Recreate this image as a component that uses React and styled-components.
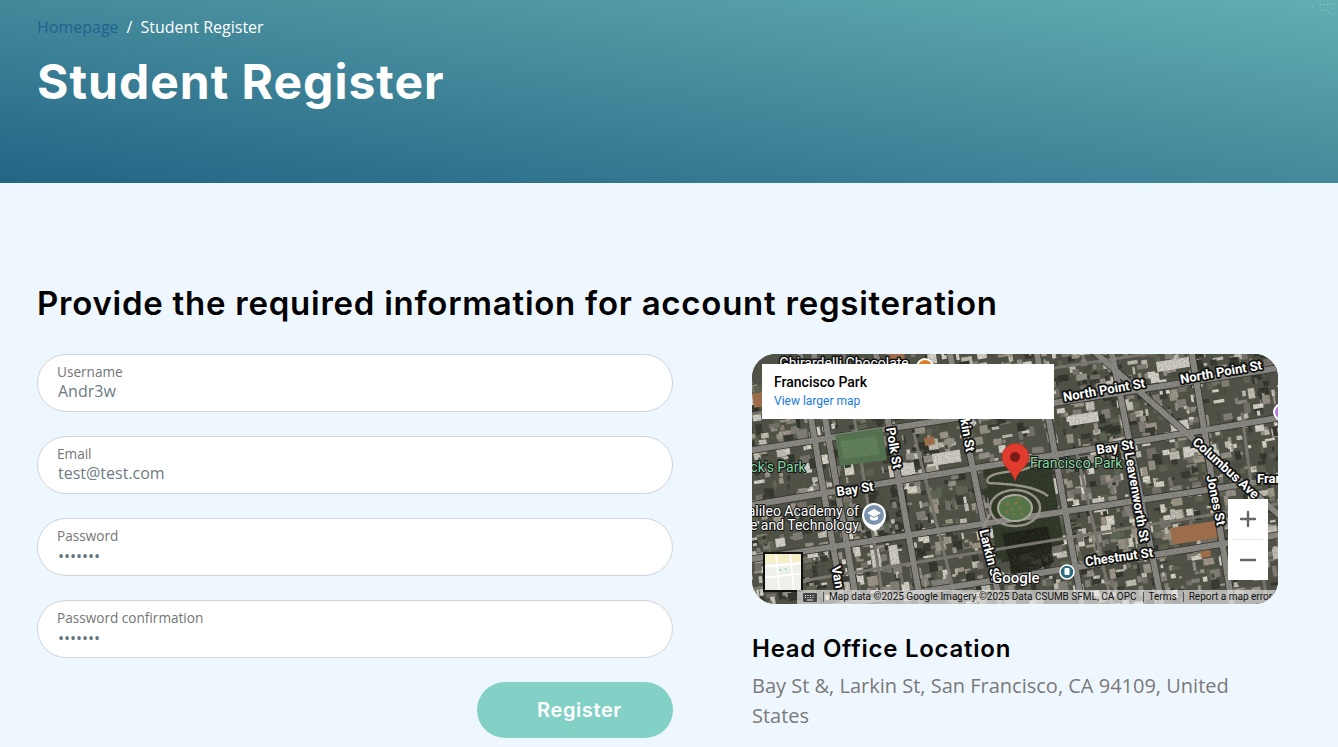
import React from "react";
import styled, { createGlobalStyle } from "styled-components";
import { Plus, Minus } from "lucide-react";

const Global = createGlobalStyle`
  html, body {
    margin: 0;
    padding: 0;
    background: #eff7fe;
    font-family: "Open Sans", "Liberation Sans", sans-serif;
  }
  * { box-sizing: border-box; }
`;

// seeded so the map looks the same on every load
let seed = 7;
const rnd = () => {
  seed = (seed * 16807) % 2147483647;
  return seed / 2147483647;
};
const roofColors = ["#9a958b", "#c9c5bb", "#33352c", "#77736a", "#a39b8c", "#2b2f25", "#e0dcd2", "#5d6450", "#474b3c", "#85827a"];
const roofs = Array.from({ length: 2600 }, () => ({
  x: rnd() * 560 - 20,
  y: rnd() * 290 - 20,
  w: 2 + rnd() * 9,
  h: 2 + rnd() * 9,
  fill: roofColors[Math.floor(rnd() * roofColors.length)],
}));
const orangeRoofs = [[418, 174, 46, 17], [448, 196, 10, 8], [172, 84, 10, 8], [136, 0, 16, 8], [0, 40, 12, 14]];
const whiteRoofs = [[118, 196, 9, 22], [136, 192, 9, 22], [316, 62, 30, 10], [404, 8, 34, 10], [136, 112, 26, 12], [180, 100, 28, 12], [290, 128, 18, 14], [418, 68, 18, 16], [340, 145, 12, 14]];
const roads = [
  [0, 96, 526, 14], [0, 151, 526, 64], [0, 205, 526, 125], [0, 265, 526, 181],
  [48, 0, 91, 250], [62, 0, 105, 250], [124, 0, 169, 250], [198, 0, 248, 250],
  [285, 0, 330, 250], [360, 0, 410, 250], [440, 0, 480, 250], [345, 0, 526, 160],
];
const thinRoads = [[0, 60, 526, -20], [0, 235, 526, 150], [92, 0, 132, 250], [162, 80, 205, 250], [325, 100, 360, 250], [490, 60, 515, 250]];
const flowerbeds = [[256, 150], [260, 155], [264, 149], [268, 154], [262, 160], [270, 160], [255, 158], [266, 145]];

const Page = styled.div`
  min-height: 747px;
  color: #000;
`;

const Banner = styled.header`
  position: relative;
  height: 183px;
  padding: 16px 37px 0;
  overflow: hidden;
  background: linear-gradient(to top right, #246485, #62aeb1);
`;

const Crumbs = styled.nav`
  display: flex;
  gap: 8px;
  font-size: 16px;
  line-height: 22px;
  color: #fff;
`;

const CrumbLink = styled.a`
  color: #1f6390;
`;

const BannerTitle = styled.h1`
  margin: 14px 0 0;
  font-family: Inter, "Liberation Sans", sans-serif;
  font-size: 48px;
  line-height: 60px;
  font-weight: 700;
  letter-spacing: 1px;
  color: #fff;
`;

const Specks = styled.svg`
  position: absolute;
  top: 0;
  right: 0;
`;

const Main = styled.main`
  padding: 100px 60px 9px 37px;
`;

const Lead = styled.h2`
  margin: 0 0 31px;
  font-family: Inter, "Liberation Sans", sans-serif;
  font-size: 33px;
  line-height: 40px;
  font-weight: 600;
  letter-spacing: 0.75px;
`;

const Columns = styled.div`
  display: grid;
  grid-template-columns: 636px 526px;
  column-gap: 79px;
`;

const Form = styled.form`
  display: flex;
  flex-direction: column;
  gap: 24px;
`;

const Field = styled.label`
  display: flex;
  flex-direction: column;
  height: 58px;
  padding: 8px 19px 0;
  background: #fff;
  border: 1px solid #ced4da;
  border-radius: 29px;
`;

const FieldName = styled.span`
  font-size: 13.6px;
  line-height: 17px;
  color: #757575;
`;

const FieldInput = styled.input`
  width: 100%;
  margin: 0;
  padding: 0 0 0 1px;
  border: 0;
  outline: 0;
  background: transparent;
  font-family: "Open Sans", sans-serif;
  font-size: 16px;
  line-height: 24px;
  height: 22px;
  color: #6c7b85;

  &[type="password"] {
    margin-top: 1px;
    color: #5f7380;
  }
`;

const Actions = styled.div`
  display: flex;
  justify-content: flex-end;
`;

const RegisterButton = styled.button`
  width: 196px;
  height: 56px;
  padding: 0 0 0 9px;
  border: 0;
  border-radius: 28px;
  background: #82d0c6;
  color: #fff;
  font-family: Inter, "Liberation Sans", sans-serif;
  font-size: 20px;
  font-weight: 600;
  letter-spacing: 0.6px;
`;

const MapFrame = styled.div`
  position: relative;
  height: 250px;
  border-radius: 24px;
  overflow: hidden;
  background: #4a4a40;
`;

const MapArt = styled.svg`
  display: block;
`;

const Street = styled.text`
  font-family: Roboto, "Liberation Sans", sans-serif;
  font-size: ${p => p.$size || 13}px;
  font-weight: ${p => p.$weight || 700};
  fill: ${p => p.$fill || "#fff"};
  stroke: #111;
  stroke-width: ${p => p.$halo || 3.5}px;
  stroke-linejoin: round;
  paint-order: stroke;
  dominant-baseline: central;
  text-anchor: ${p => p.$anchor || "middle"};
`;

const PlaceCard = styled.div`
  position: absolute;
  top: 10px;
  left: 10px;
  width: 292px;
  height: 55px;
  padding: 9px 12px;
  background: #fff;
  font-family: Roboto, sans-serif;
`;

const PlaceName = styled.div`
  font-size: 14px;
  line-height: 18px;
  font-weight: 500;
  color: #000;
`;

const PlaceLink = styled.a`
  display: block;
  margin-top: 2px;
  font-size: 12px;
  line-height: 16px;
  color: #1a79dc;
`;

const ZoomBox = styled.div`
  position: absolute;
  top: 145px;
  right: 10px;
  width: 40px;
  height: 81px;
  display: flex;
  flex-direction: column;
  align-items: center;
  background: #fff;
  color: #666;
`;

const ZoomBtn = styled.div`
  height: 40px;
  display: flex;
  align-items: center;
  justify-content: center;
`;

const ZoomRule = styled.div`
  width: 30px;
  height: 1px;
  background: #e6e6e6;
`;

const Thumb = styled.svg`
  position: absolute;
  left: 11px;
  top: 198px;
  border: 2px solid #111;
  background: #eef1ea;
`;

const Credits = styled.div`
  position: absolute;
  left: 45px;
  right: 0;
  bottom: 0;
  height: 14px;
  display: flex;
  align-items: center;
  background: rgba(245, 245, 245, 0.62);
  font-family: Roboto, sans-serif;
  font-size: 10px;
  color: #111;
  white-space: nowrap;
`;

const Keys = styled.svg`
  flex-shrink: 0;
  margin: 0 6px;
`;

const Credit = styled.span`
  padding: 0 6px 0 5px;
  border-left: 1px solid #555;
  line-height: 10px;
`;

const OfficeTitle = styled.h3`
  margin: 28px 0 0;
  font-family: Inter, "Liberation Sans", sans-serif;
  font-size: 24px;
  line-height: 34px;
  font-weight: 600;
  letter-spacing: 0.75px;
`;

const OfficeAddress = styled.p`
  margin: 5px 0 0;
  font-size: 20px;
  line-height: 30px;
  color: #7a7a7a;
`;

const fields = [
  { name: "Username", value: "Andr3w", type: "text" },
  { name: "Email", value: "test@test.com", type: "text" },
  { name: "Password", value: "1234567", type: "password" },
  { name: "Password confirmation", value: "1234567", type: "password" },
];

const specks = [[62, 6], [67, 6], [76, 4], [80, 4], [84, 4], [88, 4], [92, 3], [90, 8], [78, 11], [83, 10], [86, 13]];

function SatelliteMap() {
  return (
    <MapArt width="526" height="250" viewBox="0 0 526 250">
      <defs>
        <filter id="grain" x="0" y="0" width="100%" height="100%">
          <feTurbulence type="fractalNoise" baseFrequency="0.6" numOctaves="2" seed="4" />
          <feColorMatrix values="0 0 0 0 0.1  0 0 0 0 0.1  0 0 0 0 0.08  0.7 0 0 0 -0.2" />
        </filter>
      </defs>
      <rect width="526" height="250" fill="#4e5044" />
      <g transform="rotate(-9 263 125)">
        {roofs.map((r, i) => (
          <rect key={i} x={r.x} y={r.y} width={r.w} height={r.h} fill={r.fill} />
        ))}
      </g>
      {orangeRoofs.map(([x, y, w, h], i) => (
        <rect key={i} x={x} y={y} width={w} height={h} fill="#a8704a" transform={`rotate(-9 ${x} ${y})`} />
      ))}
      {whiteRoofs.map(([x, y, w, h], i) => (
        <rect key={i} x={x} y={y} width={w} height={h} fill="#d9d5cc" transform={`rotate(-9 ${x} ${y})`} />
      ))}
      <path d="M232 115 L298 106 L312 190 L245 206 Z" fill="#2a3322" />
      <path d="M250 180 L296 172 L302 208 L262 226 Z" fill="#14180f" opacity="0.85" />
      <g stroke="#2b2b25" strokeLinecap="square">
        {roads.map(([a, b, c, d], i) => (
          <line key={i} x1={a} y1={b} x2={c} y2={d} strokeWidth="7.5" />
        ))}
      </g>
      <g stroke="#8d8b86" strokeLinecap="square">
        {thinRoads.map(([a, b, c, d], i) => (
          <line key={i} x1={a} y1={b} x2={c} y2={d} strokeWidth="3" stroke="#7d7a72" />
        ))}
        {roads.map(([a, b, c, d], i) => (
          <line key={i} x1={a} y1={b} x2={c} y2={d} strokeWidth="6" />
        ))}
      </g>
      <path d="M83 81 L130 74 L135 106 L88 112 Z" fill="#52754f" />
      <path d="M88 87 L124 82 L128 100 L92 105 Z" fill="#5f8458" />
      <g fill="none" stroke="#a09c90" strokeWidth="2.5">
        <ellipse cx="263" cy="154" rx="25" ry="18" />
        <path d="M236 129 C232 120 250 118 270 116 L288 110 M236 129 C250 130 280 130 296 142 M238 160 L232 172" />
      </g>
      <ellipse cx="263" cy="154" rx="17" ry="13" fill="#557a48" stroke="#b9b5a8" strokeWidth="2" />
      {flowerbeds.map(([x, y], i) => (
        <circle key={i} cx={x} cy={y} r="1" fill="#c9702f" />
      ))}
      <rect width="526" height="250" filter="url(#grain)" />

      <Street $size={14} $weight={400} $halo={3} x="92" y="9">Ghirardelli Chocolate</Street>
      <circle cx="173" cy="13" r="9" fill="#fff" />
      <circle cx="173" cy="13" r="7" fill="#d9822b" />
      <circle cx="530" cy="58" r="8" fill="#b57be8" stroke="#fff" strokeWidth="2" />

      <Street transform="translate(352 36) rotate(-10)">North Point St</Street>
      <Street transform="translate(469 18) rotate(-10)">North Point St</Street>
      <Street transform="translate(363 93) rotate(-9)">Bay St</Street>
      <Street transform="translate(103 135) rotate(-9)">Bay St</Street>
      <Street transform="translate(142 94) rotate(80)">Polk St</Street>
      <Street transform="translate(214 72) rotate(80)">Larkin St</Street>
      <Street transform="translate(238 201) rotate(76)">Larkin St</Street>
      <Street transform="translate(385 143) rotate(80)">Leavenworth St</Street>
      <Street transform="translate(464 146) rotate(78)">Jones St</Street>
      <Street transform="translate(474 114) rotate(42)">Columbus Ave</Street>
      <Street transform="translate(367 203) rotate(-8)">Chestnut St</Street>
      <Street transform="translate(86 223) rotate(80)">Van</Street>
      <Street $anchor="start" x="505" y="124">Francisco</Street>

      <Street $anchor="start" $size={14} $weight={400} $fill="#8ad9a4" $halo={2} x="-17" y="113">Jack's Park</Street>
      <Street $anchor="start" $size={14} $weight={400} $fill="#8ad9a4" $halo={2} x="278" y="109">Francisco Park</Street>
      <Street $anchor="end" $size={14} $weight={400} $halo={2} x="107" y="157">Galileo Academy of</Street>
      <Street $anchor="end" $size={14} $weight={400} $halo={2} x="107" y="171">Science and Technology</Street>

      <path d="M122 177 C113 173 110 167 110 161 A12 12 0 0 1 134 161 C134 167 131 173 122 177Z" fill="#fff" />
      <circle cx="122" cy="161" r="10" fill="#7b93ae" />
      <path d="M115 159 L122 155 L129 159 L122 163Z M118 162 V165 C120 167 124 167 126 165 V162 L122 164Z" fill="#fff" />

      <circle cx="315" cy="218" r="7" fill="#2f6b7e" stroke="#fff" strokeWidth="1.5" />
      <rect x="312.500" y="214" width="5" height="7" rx="1" fill="#fff" />

      <path d="M263 127 C260 116 250 112 250 103 A13.500 13.500 0 0 1 277 103 C277 112 266 116 263 127Z" fill="#e03c2e" stroke="#b52a20" strokeWidth="0.5" />
      <circle cx="263" cy="103" r="5" fill="#7a1c15" />

      <Street $anchor="start" $size={15} $weight={500} $halo={2} x="240" y="224">Google</Street>
    </MapArt>
  );
}

export default function App() {
  return (
    <Page>
      <Global />
      <Banner>
        <Crumbs>
          <CrumbLink>Homepage</CrumbLink>
          <span>/</span>
          <span>Student Register</span>
        </Crumbs>
        <BannerTitle>Student Register</BannerTitle>
        <Specks width="30" height="16" viewBox="62 0 34 16">
          {specks.map(([x, y], i) => (
            <circle key={i} cx={x} cy={y} r="0.6" fill="#a8d5d6" />
          ))}
        </Specks>
      </Banner>
      <Main>
        <Lead>Provide the required information for account regsiteration</Lead>
        <Columns>
          <Form>
            {fields.map(f => (
              <Field key={f.name}>
                <FieldName>{f.name}</FieldName>
                <FieldInput type={f.type} defaultValue={f.value} readOnly />
              </Field>
            ))}
            <Actions>
              <RegisterButton type="button">Register</RegisterButton>
            </Actions>
          </Form>
          <div>
            <MapFrame>
              <SatelliteMap />
              <PlaceCard>
                <PlaceName>Francisco Park</PlaceName>
                <PlaceLink>View larger map</PlaceLink>
              </PlaceCard>
              <Thumb width="40" height="40" viewBox="0 0 40 40">
                <path d="M0 0H40V10H0Z" fill="#f5efc8" />
                <path d="M0 14L40 10M0 26L40 22M12 0L16 40M28 0L32 40" stroke="#fff" strokeWidth="2" />
                <path d="M16 17h2v1.500h-2zM22 16h2v1.500h-2z" fill="#5fd4a4" />
              </Thumb>
              <ZoomBox>
                <ZoomBtn><Plus size={24} strokeWidth={2.4} /></ZoomBtn>
                <ZoomRule />
                <ZoomBtn><Minus size={24} strokeWidth={2.4} /></ZoomBtn>
              </ZoomBox>
              <Credits>
                <Keys width="14" height="9" viewBox="0 0 14 9">
                  <rect width="14" height="9" rx="1" fill="#444" />
                  <path d="M2 2h1v1H2zM4.500 2h1v1h-1zM7 2h1v1H7zM9.500 2h1v1h-1zM2 4h1v1H2zM4.500 4h1v1h-1zM7 4h1v1H7zM9.500 4h1v1h-1zM4 6.500h6v1H4z" fill="#eee" />
                </Keys>
                <Credit>Map data ©2025 Google Imagery ©2025 Data CSUMB SFML, CA OPC</Credit>
                <Credit>Terms</Credit>
                <Credit>Report a map error</Credit>
              </Credits>
            </MapFrame>
            <OfficeTitle>Head Office Location</OfficeTitle>
            <OfficeAddress>Bay St &amp;, Larkin St, San Francisco, CA 94109, United States</OfficeAddress>
          </div>
        </Columns>
      </Main>
    </Page>
  );
}
